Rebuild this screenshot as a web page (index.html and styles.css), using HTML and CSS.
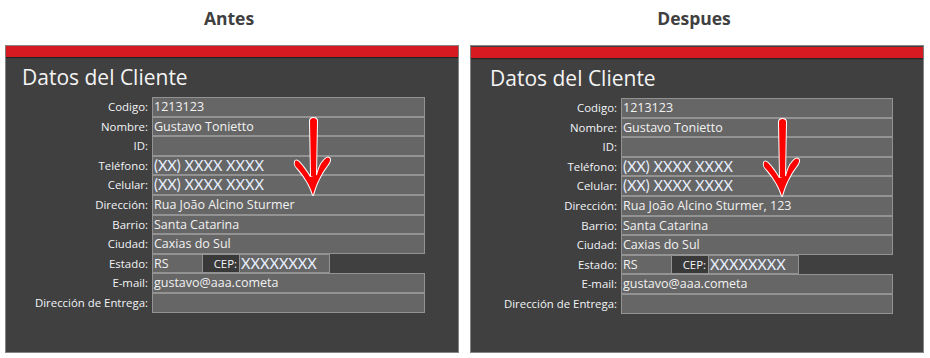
FILE: index.html
```html
<!DOCTYPE html>
<html lang="es">
<head>
<meta charset="utf-8">
<title>Antes / Despues</title>
<link rel="stylesheet" href="styles.css">
</head>
<body>
<div class="page">
  <section class="col">
    <h2 class="caption">Antes</h2>
    <div class="panel">
      <div class="panel-bar"></div>
      <h1 class="panel-title">Datos del Cliente</h1>
      <div class="form">
        <div class="label">Codigo:</div><div class="field">1213123</div>
        <div class="label">Nombre:</div><div class="field">Gustavo Tonietto</div>
        <div class="label">ID:</div><div class="field"></div>
        <div class="label">Teléfono:</div><div class="field field--big">(XX) XXXX XXXX</div>
        <div class="label">Celular:</div><div class="field field--big">(XX) XXXX XXXX</div>
        <div class="label">Dirección:</div><div class="field">Rua João Alcino Sturmer</div>
        <div class="label">Barrio:</div><div class="field">Santa Catarina</div>
        <div class="label">Ciudad:</div><div class="field">Caxias do Sul</div>
        <div class="label">Estado:</div>
        <div class="field-group">
          <div class="field field--rs">RS</div>
          <div class="cep-label">CEP:</div>
          <div class="field field--big field--cep">XXXXXXXX</div>
        </div>
        <div class="label">E-mail:</div><div class="field">gustavo@aaa.cometa</div>
        <div class="label">Dirección de Entrega:</div><div class="field"></div>
      </div>
      <svg class="arrow" width="40" height="84" viewBox="0 0 40 84" aria-hidden="true">
        <g stroke="#ffffff" stroke-width="2" stroke-linejoin="round" fill="#ffffff">
          <path d="M17,7 C17,3 24,3 24,7 L23,62 L18,62 Z"/>
          <path d="M2,48 C1,51 3,53 5,55 C11,62 17,71 20,81 C23,70 28,60 34,52 C37,48 38,45 36,44 C34,42 31,46 28,50 C26,54 25,57 24,61 L17,63 C14,58 10,52 6,48 C4,46 2,46 2,48 Z"/>
        </g>
        <g fill="#ff0000">
          <path d="M17,7 C17,3 24,3 24,7 L23,62 L18,62 Z"/>
          <path d="M2,48 C1,51 3,53 5,55 C11,62 17,71 20,81 C23,70 28,60 34,52 C37,48 38,45 36,44 C34,42 31,46 28,50 C26,54 25,57 24,61 L17,63 C14,58 10,52 6,48 C4,46 2,46 2,48 Z"/>
        </g>
      </svg>
    </div>
  </section>
  <section class="col">
    <h2 class="caption">Despues</h2>
    <div class="panel panel--after">
      <div class="panel-bar"></div>
      <h1 class="panel-title">Datos del Cliente</h1>
      <div class="form">
        <div class="label">Codigo:</div><div class="field">1213123</div>
        <div class="label">Nombre:</div><div class="field">Gustavo Tonietto</div>
        <div class="label">ID:</div><div class="field"></div>
        <div class="label">Teléfono:</div><div class="field field--big">(XX) XXXX XXXX</div>
        <div class="label">Celular:</div><div class="field field--big">(XX) XXXX XXXX</div>
        <div class="label">Dirección:</div><div class="field">Rua João Alcino Sturmer, 123</div>
        <div class="label">Barrio:</div><div class="field">Santa Catarina</div>
        <div class="label">Ciudad:</div><div class="field">Caxias do Sul</div>
        <div class="label">Estado:</div>
        <div class="field-group">
          <div class="field field--rs">RS</div>
          <div class="cep-label">CEP:</div>
          <div class="field field--big field--cep">XXXXXXXX</div>
        </div>
        <div class="label">E-mail:</div><div class="field">gustavo@aaa.cometa</div>
        <div class="label">Dirección de Entrega:</div><div class="field"></div>
      </div>
      <svg class="arrow" width="40" height="84" viewBox="0 0 40 84" aria-hidden="true">
        <g stroke="#ffffff" stroke-width="2" stroke-linejoin="round" fill="#ffffff">
          <path d="M17,7 C17,3 24,3 24,7 L23,62 L18,62 Z"/>
          <path d="M2,48 C1,51 3,53 5,55 C11,62 17,71 20,81 C23,70 28,60 34,52 C37,48 38,45 36,44 C34,42 31,46 28,50 C26,54 25,57 24,61 L17,63 C14,58 10,52 6,48 C4,46 2,46 2,48 Z"/>
        </g>
        <g fill="#ff0000">
          <path d="M17,7 C17,3 24,3 24,7 L23,62 L18,62 Z"/>
          <path d="M2,48 C1,51 3,53 5,55 C11,62 17,71 20,81 C23,70 28,60 34,52 C37,48 38,45 36,44 C34,42 31,46 28,50 C26,54 25,57 24,61 L17,63 C14,58 10,52 6,48 C4,46 2,46 2,48 Z"/>
        </g>
      </svg>
    </div>
  </section>
</div>
</body>
</html>
```

FILE: styles.css
```css
* { box-sizing: border-box; }

html, body {
  margin: 0;
  padding: 0;
  background: #ffffff;
}

body {
  font-family: "Open Sans", "Noto Sans", "Liberation Sans", sans-serif;
  width: 930px;
  height: 358px;
  overflow: hidden;
}

.page {
  display: flex;
  gap: 11px;
  padding-left: 5px;
}

.col {
  width: 454px;
  display: flex;
  flex-direction: column;
}

.caption {
  margin: 0 0 0 -6px;
  height: 45px;
  padding-top: 6px;
  font-size: 17.5px;
  font-weight: 700;
  color: #404040;
  text-align: center;
  line-height: 24px;
}

.panel {
  position: relative;
  height: 308px;
  background: #404040;
  border: 1px solid #858585;
}

.panel-bar {
  height: 11px;
  background: #d71a21;
  box-shadow: 0 1px 1px rgba(0, 0, 0, 0.45);
}

.panel-title {
  margin: 6px 0 0 16px;
  font-size: 21px;
  font-weight: 400;
  line-height: 28px;
  color: #f4f4f4;
}

.form {
  margin-top: 6px;
  padding-left: 22px;
  display: grid;
  grid-template-columns: 120px 273px;
  grid-auto-rows: 19.6px;
  column-gap: 4px;
}

.panel--after { padding-top: 1px; }
.panel--after .panel-title { margin-left: 19px; }
.panel--after .form {
  padding-left: 26px;
  grid-template-columns: 120px 272px;
}

.label {
  font-size: 11.4px;
  line-height: 19.6px;
  color: #f2f4f8;
  text-align: right;
  white-space: nowrap;
}

.field {
  height: 19.6px;
  background: #666666;
  border: 1px solid #939393;
  padding: 0 2px 0 1px;
  font-size: 12.5px;
  line-height: 17.6px;
  color: #f2f2f2;
  white-space: nowrap;
}

.field--big {
  font-family: Lato, "Open Sans", sans-serif;
  font-size: 14.6px;
  line-height: 16.6px;
  padding-top: 1px;
  color: #e8f0ff;
}

.field-group {
  display: flex;
}

.field--rs { width: 51px; }

.cep-label {
  width: 36px;
  height: 19.6px;
  background: #393939;
  border-top: 1px solid #939393;
  border-bottom: 1px solid #939393;
  padding-right: 2px;
  font-size: 11.4px;
  line-height: 17.6px;
  color: #f2f4f8;
  text-align: right;
}

.field--cep { width: 91px; }

.arrow {
  position: absolute;
  left: 287px;
  top: 68px;
}

.panel--after .arrow {
  left: 291px;
  top: 69px;
}
```
